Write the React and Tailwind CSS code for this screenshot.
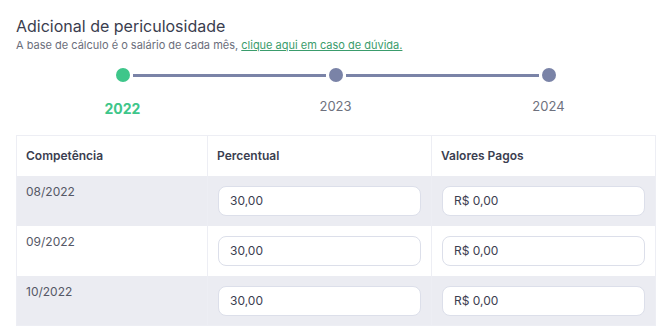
import React from 'react'

const rows = [
    { mes: '08/2022', pct: '30,00', valor: 'R$ 0,00' },
    { mes: '09/2022', pct: '30,00', valor: 'R$ 0,00' },
    { mes: '10/2022', pct: '30,00', valor: 'R$ 0,00' },
]

const years = [
    { ano: '2022', ativo: true },
    { ano: '2023', ativo: false },
    { ano: '2024', ativo: false },
]

const App = () => {
    return (
        <div className="w-[670px] h-[327px] overflow-hidden bg-white pl-4 pr-[15px] pt-[14px] font-['Inter',sans-serif] text-[#3B3E50]">
            <h1 className="text-[16px] leading-[24px] text-[#3A3D4E]">Adicional de periculosidade</h1>
            <p className="text-[11px] leading-[14px] text-[#6B6E7B]">
                A base de cálculo é o salário de cada mês,{' '}
                <a href="#" className="text-[#3A9C6C] underline">clique aqui em caso de dúvida.</a>
            </p>

            {/* stepper */}
            <div className="grid grid-cols-3 mt-[16px]">
                {years.map((y, i) => (
                    <div key={y.ano} className="flex flex-col items-center">
                        <div className="flex items-center w-full h-[14px]">
                            <div className={i === 0 ? 'flex-1' : 'flex-1 h-[3px] bg-[#7A83A7]'} />
                            <div className={'mx-[3px] w-[14px] h-[14px] rounded-full ' + (y.ativo ? 'bg-[#3EC68A]' : 'bg-[#7A83A7]')} />
                            <div className={i === years.length - 1 ? 'flex-1' : 'flex-1 h-[3px] bg-[#7A83A7]'} />
                        </div>
                        {y.ativo ? (
                            <span className="mt-[18px] text-[14px] leading-[18px] font-bold text-[#3EC68A]">{y.ano}</span>
                        ) : (
                            <span className="mt-[15px] text-[13px] leading-[18px] text-[#6E717E]">{y.ano}</span>
                        )}
                    </div>
                ))}
            </div>

            {/* tabela */}
            <table className="mt-[17px] w-full table-fixed border-collapse border border-[#EDEEF4] text-[12px]">
                <colgroup>
                    <col className="w-[191px]" />
                    <col className="w-[224px]" />
                    <col className="w-[224px]" />
                </colgroup>
                <thead>
                    <tr className="h-[40px] bg-white">
                        <th className="text-left font-semibold pl-[9px] border-r border-[#EDEEF4]">Competência</th>
                        <th className="text-left font-semibold pl-[9px] border-r border-[#EDEEF4]">Percentual</th>
                        <th className="text-left font-semibold pl-[9px]">Valores Pagos</th>
                    </tr>
                </thead>
                <tbody>
                    {rows.map((r, i) => (
                        <tr key={r.mes} className={'h-[50px] ' + (i % 2 === 0 ? 'bg-[#EBECF2]' : 'bg-white')}>
                            <td className="align-top pl-[9px] pt-[7px] leading-[18px] text-[#555866] border-r border-[#EDEEF4]">{r.mes}</td>
                            <td className="align-top px-[10px] pt-[10px] border-r border-[#EDEEF4]">
                                <div className="h-[30px] flex items-center pl-[11px] rounded-[8px] bg-white border border-[#DCDFEA] text-[#3B3E50]">{r.pct}</div>
                            </td>
                            <td className="align-top px-[10px] pt-[10px]">
                                <div className="h-[30px] flex items-center pl-[11px] rounded-[8px] bg-white border border-[#DCDFEA] text-[#3B3E50]">{r.valor}</div>
                            </td>
                        </tr>
                    ))}
                </tbody>
            </table>
        </div>
    )
}

export default App
